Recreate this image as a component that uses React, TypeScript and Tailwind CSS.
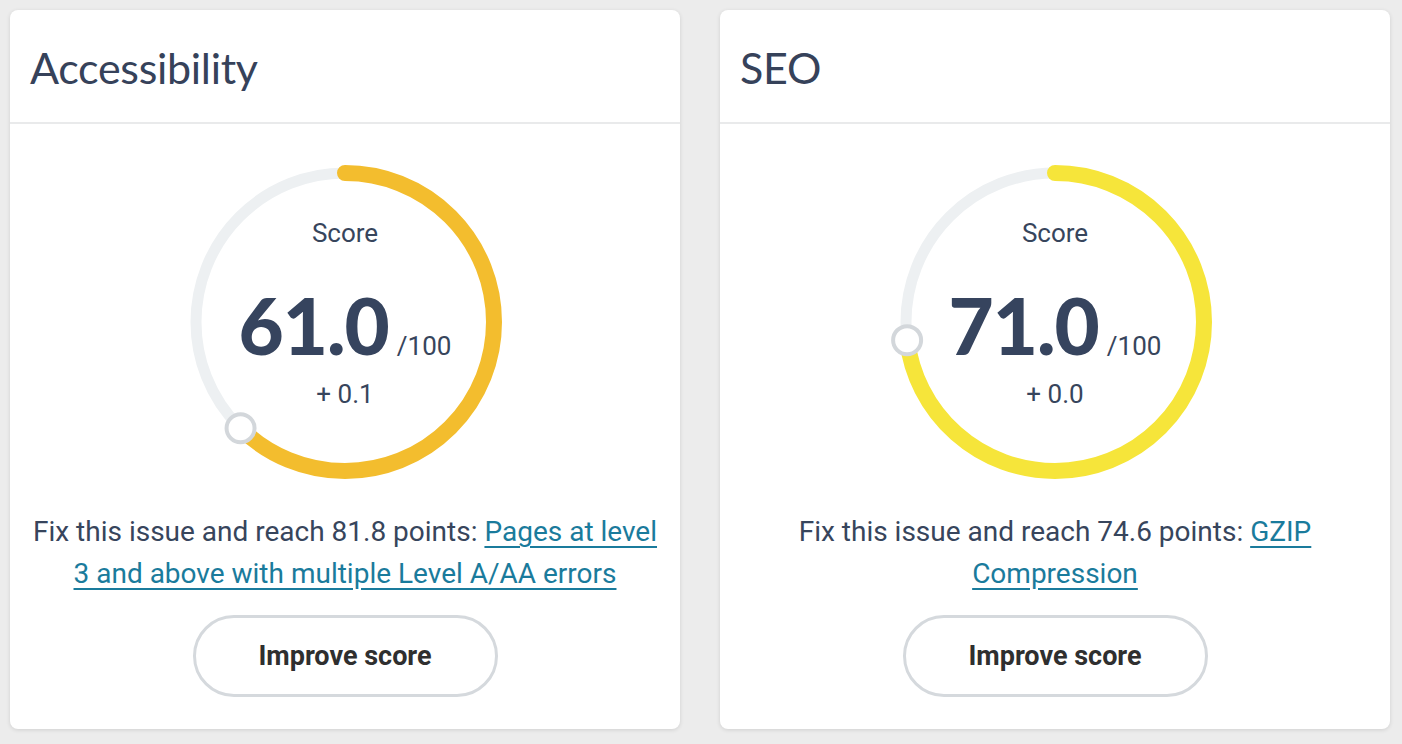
import React from "react";

type Card = {
  title: string;
  score: string;
  delta: string;
  reach: string;
  link: string;
  color: string;
  knobAngle: number;
};

const cards: Card[] = [
  {
    title: "Accessibility",
    score: "61.0",
    delta: "+ 0.1",
    reach: "81.8",
    link: "Pages at level 3 and above with multiple Level A/AA errors",
    color: "#f3bd2e",
    knobAngle: 224.5,
  },
  {
    title: "SEO",
    score: "71.0",
    delta: "+ 0.0",
    reach: "74.6",
    link: "GZIP Compression",
    color: "#f6e53a",
    knobAngle: 263,
  },
];

function Gauge({ color, angle }: { color: string; angle: number }) {
  const r = 149;
  const c = 170;
  const circ = 2 * Math.PI * r;
  const len = (angle / 360) * circ;
  const rad = (angle * Math.PI) / 180;
  const kx = c + r * Math.sin(rad);
  const ky = c - r * Math.cos(rad);
  return (
    <svg width="340" height="340" viewBox="0 0 340 340">
      <circle cx={c} cy={c} r={r} fill="none" stroke="#edf0f2" strokeWidth="11" />
      <circle
        cx={c}
        cy={c}
        r={r}
        fill="none"
        stroke={color}
        strokeWidth="16"
        strokeLinecap="round"
        strokeDasharray={`${len} ${circ}`}
        transform={`rotate(-90 ${c} ${c})`}
      />
      <circle cx={kx} cy={ky} r="14" fill="#fff" stroke="#d3d7db" strokeWidth="4" />
    </svg>
  );
}

function ScoreCard({ card }: { card: Card }) {
  return (
    <div className="w-[670px] h-[719px] bg-white rounded-lg shadow-[0_1px_4px_rgba(0,0,0,0.12)] flex flex-col">
      <div className="h-[114px] border-b-2 border-[#e9eaeb] flex items-center px-5">
        <h2 className="text-[43px] text-[#36425a] font-['Lato',sans-serif] tracking-[-0.3px] pt-1">{card.title}</h2>
      </div>
      <div className="flex flex-col items-center pt-[28px] font-['Roboto',sans-serif] text-[#37455c]">
        <div className="relative w-[340px] h-[340px]">
          <Gauge color={card.color} angle={card.knobAngle} />
          <div className="absolute inset-0 flex flex-col items-center">
            <div className="mt-[65px] text-[26px] leading-[32px]">Score</div>
            <div className="mt-[36px] flex items-baseline gap-[8px]">
              <span className="font-['Lato',sans-serif] font-black text-[78px] leading-[80px] text-[#36445e] tracking-[-1px]">{card.score}</span>
              <span className="text-[26px]">/100</span>
            </div>
            <div className="mt-[12px] text-[26px] leading-[32px]">{card.delta}</div>
          </div>
        </div>
        <p className="mt-[19px] text-[28px] leading-[42px] text-center px-[22px]">
          Fix this issue and reach {card.reach} points:{" "}
          <a href="#" className="text-[#1a7b9c] underline underline-offset-[5px]">{card.link}</a>
        </p>
        <button className="mt-[20px] w-[305px] h-[82px] rounded-full border-[3px] border-[#d5d9dd] text-[27px] font-bold text-[#2f2f2f]">
          Improve score
        </button>
      </div>
    </div>
  );
}

export default function App() {
  return (
    <div className="w-[1402px] h-[744px] bg-[#ececec] flex gap-[40px] pl-[10px] pt-[10px]">
      {cards.map((c) => (
        <ScoreCard key={c.title} card={c} />
      ))}
    </div>
  );
}
